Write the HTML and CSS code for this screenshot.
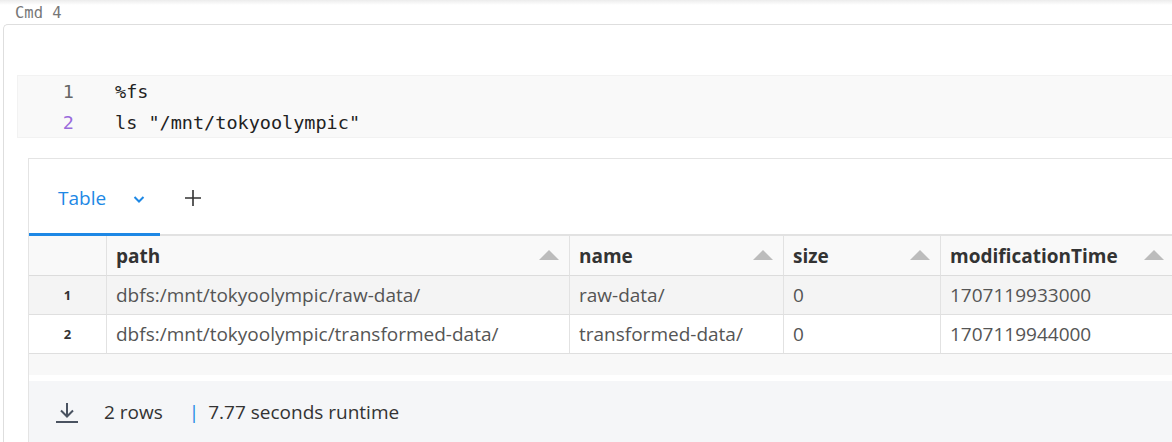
FILE: index.html
```html
<!DOCTYPE html>
<html>
<head>
<meta charset="utf-8">
<link rel="stylesheet" href="styles.css">
</head>
<body>
<div class="shadow"></div>
<div class="cmd">Cmd 4</div>
<div class="cell">
  <div class="code">
    <div class="line"><span class="ln">1</span><span class="src">%fs</span></div>
    <div class="line"><span class="ln ln-active">2</span><span class="src">ls "/mnt/tokyoolympic"</span></div>
  </div>
  <div class="output">
    <div class="tabs">
      <div class="tab active">
        <span class="tab-label">Table</span>
        <svg class="chev" width="14" height="10" viewBox="0 0 14 10"><path d="M2.5 3 L7 7.5 L11.5 3" fill="none" stroke="#1e88e5" stroke-width="2"/></svg>
      </div>
      <svg class="plus" width="18" height="18" viewBox="0 0 18 18"><path d="M9 1 V17 M1 9 H17" stroke="#333" stroke-width="1.6"/></svg>
    </div>
    <div class="grid">
      <div class="hd rn"></div>
      <div class="hd"><span>path</span><i class="tri"></i></div>
      <div class="hd"><span>name</span><i class="tri"></i></div>
      <div class="hd"><span>size</span><i class="tri"></i></div>
      <div class="hd"><span>modificationTime</span><i class="tri"></i></div>

      <div class="td rn odd">1</div>
      <div class="td odd">dbfs:/mnt/tokyoolympic/raw-data/</div>
      <div class="td odd">raw-data/</div>
      <div class="td odd">0</div>
      <div class="td odd">1707119933000</div>

      <div class="td rn">2</div>
      <div class="td">dbfs:/mnt/tokyoolympic/transformed-data/</div>
      <div class="td">transformed-data/</div>
      <div class="td">0</div>
      <div class="td">1707119944000</div>
    </div>
    <div class="scroll"></div>
    <div class="footer">
      <svg class="dl" width="24" height="22" viewBox="0 0 24 22"><path d="M12 1 V14 M6 8.5 L12 14.5 L18 8.5" fill="none" stroke="#4a5361" stroke-width="2"/><path d="M1 20 H23" stroke="#4a5361" stroke-width="2"/></svg>
      <span class="rows">2 rows</span>
      <span class="sep">|</span>
      <span class="runtime">7.77 seconds runtime</span>
    </div>
  </div>
</div>
</body>
</html>
```
FILE: styles.css
```css
html, body {
  margin: 0;
  padding: 0;
  background: #fff;
  overflow: hidden;
  width: 1172px;
  height: 442px;
}
body {
  font-family: "Open Sans", "Noto Sans", sans-serif;
}
.shadow {
  height: 5px;
  background: linear-gradient(#ececec, #fff);
}
.cmd {
  height: 19px;
  padding-left: 15px;
  font-family: "DejaVu Sans Mono", monospace;
  font-size: 15.5px;
  line-height: 19px;
  color: #777;
  margin-top: -1px;
}
.cell {
  margin-left: 3px;
  margin-top: 1px;
  width: 1200px;
  border-top: 1px solid #dedede;
  border-left: 1px solid #dedede;
  border-top-left-radius: 5px;
  padding-top: 50px;
  padding-left: 13px;
  height: 420px;
}
.code {
  background: #f9f9f9;
  border: 1px solid #f2f2f2;
  height: 61px;
}
.line {
  display: flex;
  height: 31px;
  align-items: center;
  font-family: "DejaVu Sans Mono", monospace;
  font-size: 18.5px;
  color: #222;
}
.ln {
  width: 56px;
  text-align: right;
  color: #666;
  padding-right: 41px;
}
.ln-active { color: #9a6bdc; }
.output {
  margin-left: 11px;
  margin-top: 20px;
  border-top: 1px solid #e4e4e4;
  border-left: 1px solid #e4e4e4;
}
.tabs {
  height: 75px;
  display: flex;
  align-items: center;
  border-bottom: 2px solid #e2e2e2;
}
.tab {
  width: 131px;
  height: 75px;
  box-sizing: border-box;
  display: flex;
  align-items: center;
  padding-left: 29px;
  position: relative;
}
.tab.active::after {
  content: "";
  position: absolute;
  left: 0;
  right: 0;
  bottom: -2px;
  height: 3px;
  background: #1e88e5;
}
.tab-label {
  font-size: 19px;
  color: #1e88e5;
  margin-top: 3px;
}
.chev {
  margin-left: 26px;
  margin-top: 4px;
}
.plus {
  margin-left: 24px;
  margin-top: 2px;
}
.grid {
  display: grid;
  grid-template-columns: 78px 463px 214px 157px 234px;
}
.hd {
  height: 39px;
  background: #f9f9f9;
  border-bottom: 1px solid #dcdcdc;
  border-right: 1px solid #e2e2e2;
  display: flex;
  align-items: center;
  justify-content: space-between;
  padding: 0 10px 0 9px;
  font-weight: 700;
  font-size: 19px;
  color: #333;
}
.hd span { margin-top: 1px; }
.tri {
  width: 0;
  height: 0;
  border-left: 10px solid transparent;
  border-right: 10px solid transparent;
  border-bottom: 10px solid #bcbcbc;
  margin-top: -2px;
}
.td {
  height: 38px;
  border-bottom: 1px solid #dfdfdf;
  border-right: 1px solid #e2e2e2;
  display: flex;
  align-items: center;
  padding-left: 9px;
  font-size: 19px;
  color: #555;
}
.td.odd { background: #f4f4f4; }
.hd.rn, .td.rn {
  padding: 0;
  justify-content: center;
}
.td.rn {
  font-size: 13px;
  font-weight: 700;
  color: #333;
}
.scroll {
  height: 21px;
  background: #f8f8f8;
}
.footer {
  margin-top: 6px;
  height: 61px;
  background: #f5f6f8;
  display: flex;
  align-items: center;
  padding-left: 26px;
  font-size: 19px;
  color: #333;
}
.dl { margin-top: 2px; }
.rows { margin-left: 25px; }
.sep { margin-left: 26px; color: #1e88e5; }
.runtime { margin-left: 9px; }
```
